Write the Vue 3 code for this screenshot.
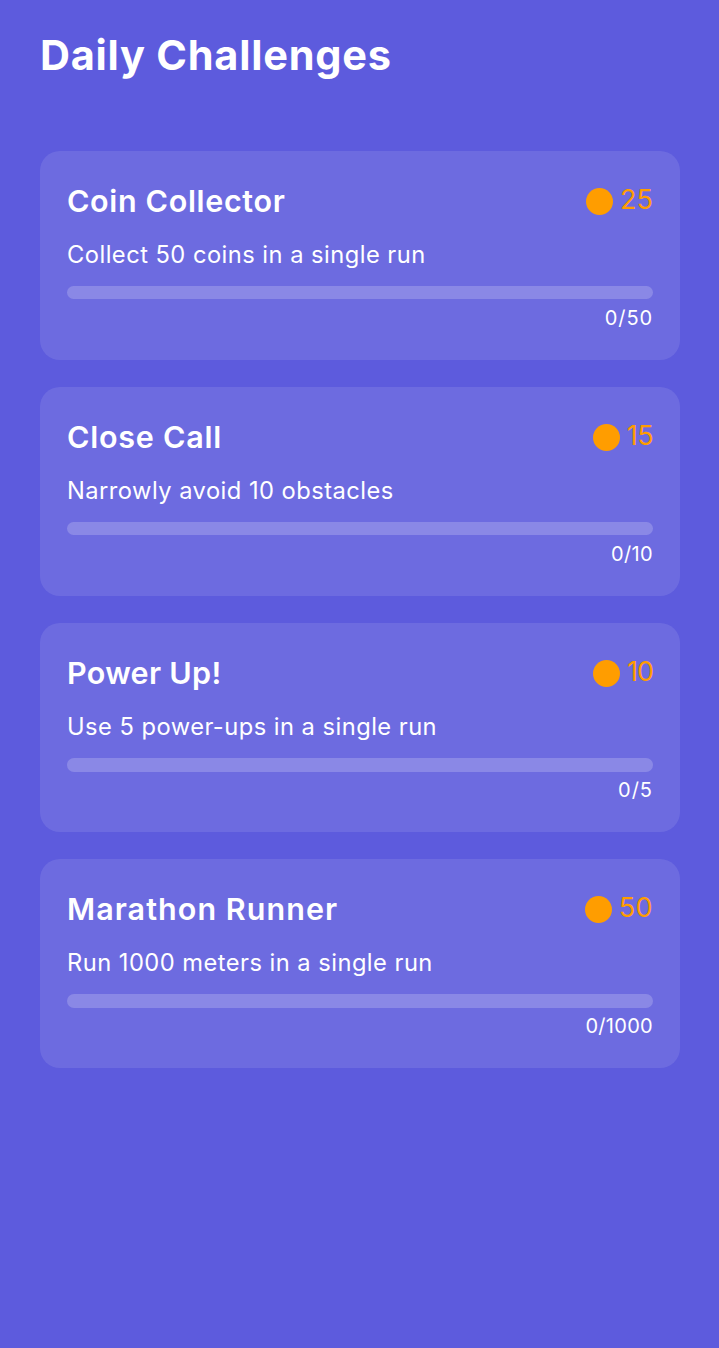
<template>
  <div class="challenges-page">
    <h1 class="page-title">Daily Challenges</h1>

    <div class="challenge-list">
      <div v-for="item in challenges" :key="item.id" class="challenge-card">
        <div class="card-header">
          <h2 class="challenge-name">{{ item.name }}</h2>
          <div class="reward">
            <span class="coin"></span>
            <span class="amount">{{ item.reward }}</span>
          </div>
        </div>
        <p class="description">{{ item.description }}</p>
        <div class="progress-bar">
          <div class="progress-fill" :style="{ width: percent(item) }"></div>
        </div>
        <div class="progress-text">{{ item.progress }}/{{ item.target }}</div>
      </div>
    </div>
  </div>
</template>

<script setup>
const challenges = [
  { id: 1, name: 'Coin Collector', description: 'Collect 50 coins in a single run', reward: 25, progress: 0, target: 50 },
  { id: 2, name: 'Close Call', description: 'Narrowly avoid 10 obstacles', reward: 15, progress: 0, target: 10 },
  { id: 3, name: 'Power Up!', description: 'Use 5 power-ups in a single run', reward: 10, progress: 0, target: 5 },
  { id: 4, name: 'Marathon Runner', description: 'Run 1000 meters in a single run', reward: 50, progress: 0, target: 1000 },
]

function percent(item) {
  return `${Math.min(100, (item.progress / item.target) * 100)}%`
}
</script>

<style>
body {
  margin: 0;
  background: #5d5bdd;
}
</style>

<style scoped>
.challenges-page {
  box-sizing: border-box;
  min-height: 1348px;
  padding: 25px 39px 40px 40px;
  background: #5d5bdd;
  color: #fff;
  font-family: Inter, 'Open Sans', sans-serif;
}

.page-title {
  margin: 0 0 66px;
  font-size: 41.5px;
  line-height: 60px;
  font-weight: 700;
  letter-spacing: 0.75px;
}

.challenge-list {
  display: flex;
  flex-direction: column;
  gap: 27.1px;
}

.challenge-card {
  --name-spacing: 0.65px;
  --amount-spacing: 0;
  --count-spacing: 0.9px;
  box-sizing: border-box;
  height: 209px;
  padding: 27px;
  border-radius: 20px;
  background: rgba(255, 255, 255, 0.1);
}

.challenge-card:nth-child(2) {
  --name-spacing: 0.75px;
  --amount-spacing: -0.6px;
  --count-spacing: 0.35px;
}

.challenge-card:nth-child(3) {
  --name-spacing: 0.3px;
  --amount-spacing: -1px;
  --count-spacing: 1px;
}

.challenge-card:nth-child(4) {
  --name-spacing: 1.05px;
  --amount-spacing: 0.4px;
  --count-spacing: 0.3px;
}

.card-header {
  display: flex;
  justify-content: space-between;
  align-items: center;
  height: 47px;
}

.challenge-name {
  margin: 0;
  padding-bottom: 2px;
  font-size: 30.5px;
  line-height: 46px;
  font-weight: 600;
  letter-spacing: var(--name-spacing);
}

.reward {
  display: flex;
  align-items: center;
  gap: 7px;
  color: #ff9d00;
}

.coin {
  width: 27px;
  height: 27px;
  border-radius: 50%;
  background: #ff9d00;
}

.amount {
  font-size: 27px;
  line-height: 40px;
  padding-bottom: 3px;
  letter-spacing: var(--amount-spacing);
}

.description {
  margin: 12px 0 13px;
  font-size: 23.7px;
  line-height: 36px;
  letter-spacing: 0.47px;
}

.progress-bar {
  height: 13.33px;
  border-radius: 7px;
  background: rgba(255, 255, 255, 0.2);
  overflow: hidden;
}

.progress-fill {
  height: 100%;
  background: #ff9d00;
}

.progress-text {
  margin-top: 2.8px;
  font-size: 20px;
  line-height: 32px;
  text-align: right;
  letter-spacing: var(--count-spacing);
}
</style>
